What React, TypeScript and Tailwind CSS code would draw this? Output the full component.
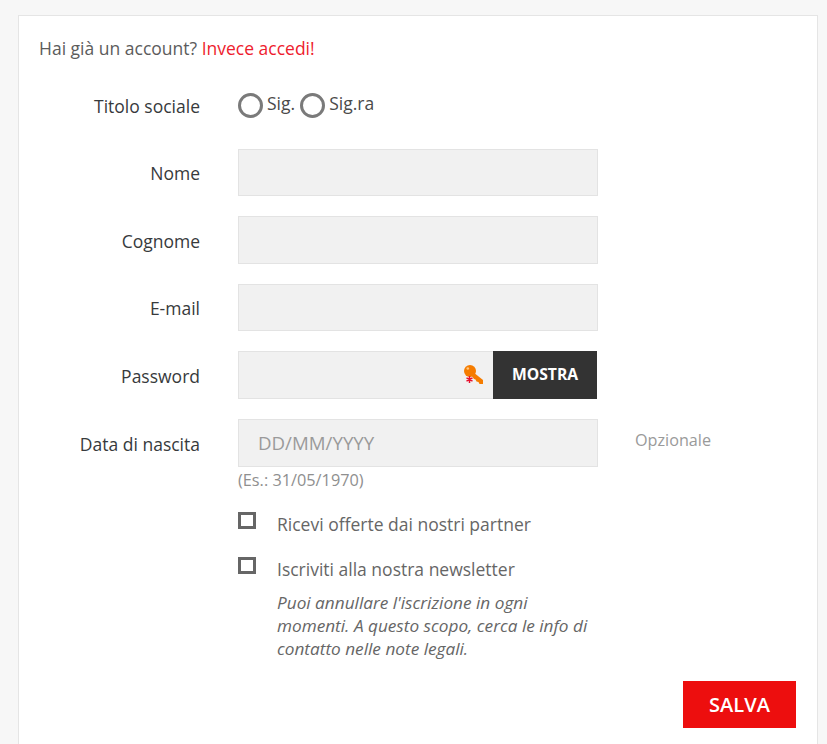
import React from 'react';

const KeyIcon = () => (
  <svg width="20" height="20" viewBox="0 0 20 20" className="shrink-0">
    <circle cx="6" cy="6" r="6" fill="#f57c00" />
    <circle cx="3.800" cy="3.500" r="1.300" fill="#ffc680" />
    <path d="M9 7l10 8v4h-3.500l-1-2-2-.5-1-2-1.500-.5L7 10z" fill="#f57c00" />
    <path d="M5.500 11v7M2.500 12.800l6 3.400M8.500 12.800l-6 3.400" stroke="#e8112d" strokeWidth="1.500" />
  </svg>
);

const Field = ({ label, children, note }: { label: string; children: React.ReactNode; note?: string }) => (
  <div className="flex mb-5">
    <label className={`w-[161px] shrink-0 text-right text-[#373a3c] text-[17.5px] leading-[24px] ${note ? 'pt-[13px]' : 'pt-[12.5px]'}`}>{label}</label>
    <div className="w-[360px] ml-[38px] shrink-0">{children}</div>
    {note && <span className="ml-[37px] pt-[9px] text-[16.2px] leading-[24px] text-[#9a9a9a]">{note}</span>}
  </div>
);

const inputClass = 'block w-full h-[47.5px] bg-[#f1f1f1] border border-[#e3e3e3] outline-none';

const Radio = ({ label }: { label: string }) => (
  <span className="flex items-start">
    <span className="w-[25px] h-[25px] rounded-full border-[3px] border-[#7a7a7a] bg-white mt-[1px] mr-[4px]" />
    <span className="text-[#4a4a4a] text-[17.5px] leading-[24px] -mt-[1px]">{label}</span>
  </span>
);

const Check = ({ label }: { label: string }) => (
  <div className="flex items-start">
    <span className="w-[18px] h-[17px] border-[3px] border-[#666666] bg-white mt-[1px] shrink-0" />
    <span className="ml-[21px] text-[#666666] text-[17.5px] leading-[24px] mt-[1px]">{label}</span>
  </div>
);

export default function App() {
  return (
    <div className="bg-[#f7f7f7] h-[744px] overflow-hidden pt-[15px] pl-[18px] pr-[9px] font-['Open_Sans',sans-serif]">
      <div className="bg-white border border-[#e5e5e5] h-[760px] pt-[20px] pl-[20px] pr-[21px]">
        <p className="text-[17.5px] leading-[24px] text-[#5c5c5c]">
          Hai già un account? <a className="text-[#ee1c2e]">Invece accedi!</a>
        </p>

        <div className="mt-[28px]">
          <div className="flex h-[60.5px]">
            <label className="w-[161px] shrink-0 text-right text-[#373a3c] text-[17.5px] leading-[24px] pt-[6px]">Titolo sociale</label>
            <div className="ml-[38px] flex gap-[5px] pt-[4px]">
              <Radio label="Sig." />
              <Radio label="Sig.ra" />
            </div>
          </div>

          <Field label="Nome"><input className={inputClass} /></Field>
          <Field label="Cognome"><input className={inputClass} /></Field>
          <Field label="E-mail"><input className={inputClass} /></Field>
          <Field label="Password">
            <div className="flex h-[47.5px] w-[359px]">
              <div className="flex-1 bg-[#f1f1f1] border border-[#e3e3e3] border-r-0 flex items-center justify-end pr-[9px]">
                <KeyIcon />
              </div>
              <button className="w-[104px] bg-[#333333] text-white text-[15.7px] font-bold pt-[1px]">MOSTRA</button>
            </div>
          </Field>
          <Field label="Data di nascita" note="Opzionale">
            <input className="block w-full h-[48px] bg-[#f1f1f1] border border-[#e3e3e3] outline-none px-[19px] text-[18.7px] placeholder:text-[#9a9a9a]" placeholder="DD/MM/YYYY" />
            <p className="text-[16.3px] leading-[24px] text-[#8f8f8f] mt-[1px]">(Es.: 31/05/1970)</p>
          </Field>
        </div>

        <div className="ml-[199px] w-[360px] -mt-[1px]">
          <Check label="Ricevi offerte dai nostri partner" />
          <div className="mt-[20px]">
            <Check label="Iscriviti alla nostra newsletter" />
          </div>
          <p className="ml-[39px] w-[321px] mt-[10.5px] text-[17.2px] leading-[23px] italic text-[#666666]">
            Puoi annullare l'iscrizione in ogni momenti. A questo scopo, cerca le info di contatto nelle note legali.
          </p>
        </div>

        <div className="flex justify-end mt-[21px]">
          <button className="w-[113px] h-[47px] bg-[#ed0e0e] text-white text-[20px] font-semibold">SALVA</button>
        </div>
      </div>
    </div>
  );
}
